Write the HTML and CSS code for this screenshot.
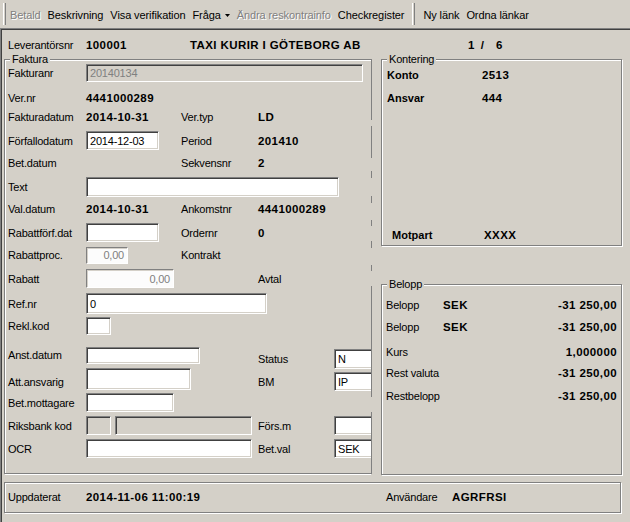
FILE: index.html
```html
<!DOCTYPE html>
<html lang="sv">
<head>
<meta charset="utf-8">
<title>Leverantörsfaktura</title>
<link rel="stylesheet" href="styles.css">
</head>
<body>
<div class="toolbar">
  <span class="grip"></span>
  <span class="tb dis">Betald</span>
  <span class="tb">Beskrivning</span>
  <span class="tb">Visa verifikation</span>
  <span class="tb">Fråga<svg class="caret" width="5" height="3" viewBox="0 0 5 3"><path d="M0 0H5L2.5 3Z" fill="#000"/></svg></span>
  <span class="tb dis">Ändra reskontrainfo</span>
  <span class="tb">Checkregister</span>
  <span class="sep"></span>
  <span class="tb">Ny länk</span>
  <span class="tb">Ordna länkar</span>
</div>
<div class="main">
  <div class="header">
    <span class="h1">Leverantörsnr</span>
    <span class="h2 b">100001</span>
    <span class="h3 b">TAXI KURIR I GÖTEBORG AB</span>
    <span class="h4 b">1 /  6</span>
  </div>
  <div class="body">
    <div class="clip">
      <div class="group faktura">
        <span class="legend">Faktura</span>
        <div class="rows">
          <div class="row first"><span>Fakturanr</span><div class="inp gray sp4 w277 h18">20140134</div></div>
          <div class="row g8"><span>Ver.nr</span><span class="b">4441000289</span></div>
          <div class="row g1"><span>Fakturadatum</span><span class="b">2014-10-31</span><span>Ver.typ</span><span class="b">LD</span></div>
          <div class="row"><span>Förfallodatum</span><div class="inp w73 h19">2014-12-03</div><span>Period</span><span class="b">201410</span></div>
          <div class="row"><span>Bet.datum</span><span class="c3">Sekvensnr</span><span class="b">2</span></div>
          <div class="row"><span>Text</span><div class="inp sp4 w253 h20"></div></div>
          <div class="row"><span>Val.datum</span><span class="b">2014-10-31</span><span>Ankomstnr</span><span class="b">4441000289</span></div>
          <div class="row"><span>Rabattförf.dat</span><div class="inp w73 h19"></div><span>Ordernr</span><span class="b">0</span></div>
          <div class="row"><span>Rabattproc.</span><div class="inp flat w42 h17">0,00</div><span>Kontrakt</span></div>
          <div class="row"><span>Rabatt</span><div class="inp flat sp2 w88 h19">0,00</div><span>Avtal</span></div>
          <div class="row g6"><span>Ref.nr</span><div class="inp sp3 w181 h21">0</div></div>
          <div class="row g6"><span>Rekl.kod</span><div class="inp w25 h18"></div></div>
          <div class="row g6"><span>Anst.datum</span><div class="inp sp2 w114 h17"></div><span class="lower">Status</span><div class="inp w40 h20 lower">N</div></div>
          <div class="row g9"><span>Att.ansvarig</span><div class="inp sp2 w105 h22 raise"></div><span>BM</span><div class="inp w40 h19">IP</div></div>
          <div class="row g7"><span>Bet.mottagare</span><div class="inp w88 h19"></div></div>
          <div class="row"><span>Riksbank kod</span><div class="pair sp2"><div class="inp gray w25 h19"></div><div class="inp gray w137 h19"></div></div><span>Förs.m</span><div class="inp w40 h19"></div></div>
          <div class="row"><span>OCR</span><div class="inp sp2 w166 h19"></div><span>Bet.val</span><div class="inp w40 h19">SEK</div></div>
        </div>
      </div>
    </div>
    <div class="edge"></div>
    <div class="side">
      <div class="group kontering">
        <span class="legend">Kontering</span>
        <div class="krow"><span class="bl">Konto</span><span class="b">2513</span></div>
        <div class="krow"><span class="bl">Ansvar</span><span class="b">444</span></div>
        <div class="krow motpart"><span class="bl">Motpart</span><span class="b">XXXX</span></div>
      </div>
      <div class="group belopp">
        <span class="legend">Belopp</span>
        <div class="brow"><span>Belopp</span><span class="b">SEK</span><span class="b amt">-31 250,00</span></div>
        <div class="brow g6"><span>Belopp</span><span class="b">SEK</span><span class="b amt">-31 250,00</span></div>
        <div class="brow g9"><span>Kurs</span><span class="b amt c3">1,000000</span></div>
        <div class="brow g5"><span>Rest valuta</span><span class="b amt c3">-31 250,00</span></div>
        <div class="brow g7"><span>Restbelopp</span><span class="b amt c3">-31 250,00</span></div>
      </div>
    </div>
  </div>
  <div class="group footer">
    <span>Uppdaterat</span><span class="b">2014-11-06 11:00:19</span><span>Användare</span><span class="b">AGRFRSI</span>
  </div>
</div>
</body>
</html>
```
FILE: styles.css
```css
html, body {
  margin: 0;
  width: 630px;
  height: 522px;
  overflow: hidden;
  background: #d4d0c8;
  font-family: "Liberation Sans", Arial, sans-serif;
  font-size: 11px;
  letter-spacing: -0.2px;
  color: #000;
}

.b {
  font-weight: bold;
  font-size: 11.5px;
  letter-spacing: 0.4px;
}
.bl {
  font-weight: bold;
  font-size: 11px;
  letter-spacing: 0;
}

/* toolbar */
.toolbar {
  height: 28px;
  box-sizing: border-box;
  display: flex;
  align-items: center;
  gap: 1px;
  padding: 2px 0 0 3px;
  letter-spacing: -0.1px;
}
.grip, .sep {
  width: 1px;
  height: 22px;
  border-left: 1px solid #fff;
  border-right: 1px solid #808080;
  flex: none;
}
.grip { margin-top: -2px; }
.sep { margin: -2px 4px 0 4px; }
.tb {
  padding: 0 3px;
  line-height: 14px;
  white-space: nowrap;
  display: flex;
  align-items: center;
}
.tb.dis {
  color: #808080;
  text-shadow: 1px 1px 0 #fff;
}
.caret { margin-left: 4px; }

/* main panel */
.main {
  height: 494px;
  box-sizing: border-box;
  border-top: 1px solid #808080;
  border-left: 1px solid #808080;
  padding: 1px 0 0 1px;
  box-shadow: inset 1px 1px 0 #404040;
}
.header {
  height: 23px;
  box-sizing: border-box;
  padding: 8px 0 0 6px;
  display: flex;
  line-height: 14px;
}
.h1 { width: 78px; }
.h2 { width: 104px; }
.h3 { width: 278px; }
.h4 { white-space: pre; word-spacing: 2.3px; }

.body {
  display: flex;
  height: 422px;
}
.clip {
  width: 369px;
  height: 416px;
  padding-top: 6px;
  overflow: hidden;
  flex: none;
}
.edge {
  width: 1px;
  height: 416px;
  margin-top: 6px;
  flex: none;
  background: linear-gradient(to bottom,
    #808080 0 61px, transparent 61px 67px,
    #808080 67px 99px, transparent 99px 112px,
    #808080 112px 119px, transparent 119px 137px,
    #808080 137px 144px, transparent 144px 161px,
    #808080 161px 167px, transparent 167px 182px,
    #808080 182px 189px, transparent 189px 206px,
    #808080 206px 212px, transparent 212px 227px,
    #808080 227px 338px, transparent 338px 353px,
    #808080 353px 415px, transparent 415px);
}
.side {
  margin: 6px 0 0 9px;
  width: 242px;
  flex: none;
}

/* group boxes (etched) */
.group {
  position: relative;
  box-sizing: border-box;
  border: 1px solid #808080;
  box-shadow: inset 1px 1px 0 #fff, 1px 1px 0 #fff;
}
.legend {
  position: absolute;
  top: -7px;
  left: 5px;
  padding: 0 2px;
  line-height: 13px;
  background: #d4d0c8;
}

.faktura {
  margin-left: 2px;
  width: 430px;
  height: 415px;
}
.rows {
  display: flex;
  flex-direction: column;
  padding-left: 3px;
}
.row {
  display: grid;
  grid-template-columns: 78px 95px 77px 76px 60px;
  height: 18px;
  align-items: center;
  justify-items: start;
  margin-top: 5px;
  line-height: 14px;
}
.row.first { margin-top: 4px; }
.g1 { margin-top: 1px; }
.g5 { margin-top: 5px; }
.g6 { margin-top: 6px; }
.g7 { margin-top: 7px; }
.g8 { margin-top: 7px; }
.g9 { margin-top: 9px; }
.c3 { grid-column: 3; }
.sp2 { grid-column: span 2; }
.sp3 { grid-column: span 3; }
.sp4 { grid-column: span 4; }
.lower { margin-top: 8px; }
.raise { margin-bottom: 5px; }

.pair {
  display: flex;
  gap: 4px;
}

/* text boxes */
.inp {
  box-sizing: border-box;
  background: #fff;
  border: 1px solid;
  border-color: #808080 #fff #fff #808080;
  box-shadow: inset 1px 1px 0 #404040, inset -1px -1px 0 #d4d0c8;
  padding: 0 3px;
  display: flex;
  align-items: center;
  white-space: nowrap;
  overflow: hidden;
}
.inp.gray {
  background: #d4d0c8;
  color: #808080;
}
.inp.flat {
  background: #fcfcfc;
  color: #808080;
  box-shadow: inset 1px 1px 0 #d4d0c8;
  justify-content: flex-end;
}
.w25 { width: 25px; }
.w40 { width: 40px; }
.w42 { width: 42px; }
.w73 { width: 73px; }
.w88 { width: 88px; }
.w105 { width: 105px; }
.w114 { width: 114px; }
.w137 { width: 137px; }
.w166 { width: 166px; }
.w181 { width: 181px; }
.w253 { width: 253px; }
.w277 { width: 277px; }
.h17 { height: 17px; }
.h18 { height: 18px; }
.h19 { height: 19px; }
.h20 { height: 20px; }
.h21 { height: 21px; }
.h22 { height: 22px; }

/* Kontering */
.kontering {
  width: 241px;
  height: 187px;
  display: flex;
  flex-direction: column;
  padding: 7px 0 2px 5px;
}
.krow {
  display: grid;
  grid-template-columns: 95px auto;
  height: 16px;
  align-items: center;
  line-height: 14px;
}
.krow + .krow { margin-top: 7px; }
.krow.motpart {
  margin-top: auto;
  padding-left: 5px;
  grid-template-columns: 92px auto;
}

/* Belopp */
.belopp {
  width: 241px;
  height: 191px;
  margin-top: 38px;
  padding: 12px 4px 0 4px;
}
.brow {
  display: grid;
  grid-template-columns: 57px 60px 1fr;
  height: 16px;
  align-items: center;
  line-height: 14px;
}
.amt { justify-self: end; }

/* footer */
.footer {
  margin: 7px 0 0 2px;
  width: 617px;
  height: 31px;
  padding: 6px 0 0 3px;
  display: grid;
  grid-template-columns: 78px 300px 66px auto;
  grid-template-rows: 16px;
  align-items: center;
  line-height: 14px;
}
```
